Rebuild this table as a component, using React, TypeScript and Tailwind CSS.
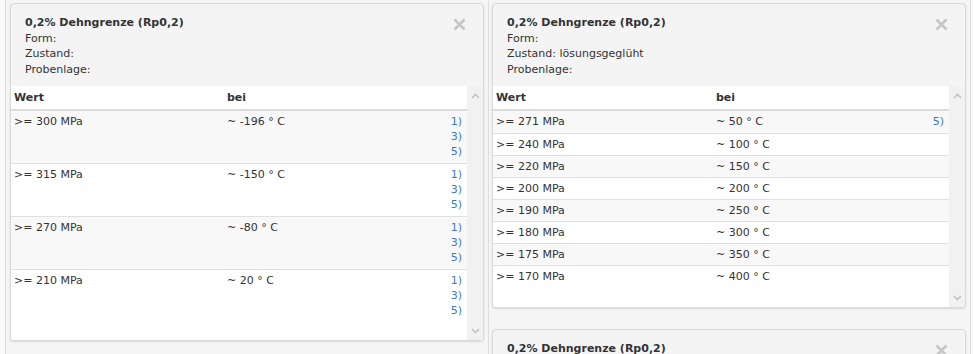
import * as React from 'react';

interface Row {
    wert: string;
    bei: string;
    refs: string[];
}

interface CardProps {
    zustand?: string;
    rows?: Row[];
    firstCol?: number;
    tableHeight?: number;
}

function CloseIcon() {
    return (
        <svg width="13" height="13" viewBox="0 0 13 13" className="shrink-0">
            <path d="M1.5 1.5 L11.5 11.5 M11.5 1.5 L1.5 11.5" stroke="#c6c6c6" strokeWidth="2.6" strokeLinecap="butt" />
        </svg>
    );
}

function Chevron({ up }: { up?: boolean }) {
    return (
        <svg width="9" height="6" viewBox="0 0 9 6">
            <path
                d={up ? 'M1 5 L4.5 1.5 L8 5' : 'M1 1 L4.5 4.5 L8 1'}
                fill="none"
                stroke="#c3c3c3"
                strokeWidth="1.6"
            />
        </svg>
    );
}

function Card({ zustand = '', rows, firstCol = 220, tableHeight = 220 }: CardProps) {
    return (
        <div className="rounded-[4px] border border-[#dadada] bg-[#f4f4f4] shadow-[0_1px_2px_rgba(0,0,0,0.12)] overflow-hidden">
            {/* Header */}
            <div className="flex justify-between pl-[14px] pr-[17px] pt-[11px] pb-[9px] leading-[15.5px]">
                <div>
                    <div className="font-bold text-[#333]">0,2% Dehngrenze (Rp0,2)</div>
                    {rows && (
                        <>
                            <div>Form:</div>
                            <div>Zustand:{zustand && ` ${zustand}`}</div>
                            <div>Probenlage:</div>
                        </>
                    )}
                </div>
                <div className="pt-[3px]">
                    <CloseIcon />
                </div>
            </div>

            {/* Table with scrollbar */}
            {rows && (
                <div className="flex bg-white" style={{ height: tableHeight }}>
                    <div className="flex-1">
                        <table className="w-full table-fixed border-collapse leading-[15px]">
                            <colgroup>
                                <col style={{ width: firstCol }} />
                                <col />
                                <col className="w-[40px]" />
                            </colgroup>
                            <thead>
                                <tr className="border-b-2 border-[#dcdcdc]">
                                    <th className="text-left font-bold px-[3px] pt-[4px] pb-[4px]">Wert</th>
                                    <th className="text-left font-bold px-[3px] pt-[4px] pb-[4px]">bei</th>
                                    <th />
                                </tr>
                            </thead>
                            <tbody>
                                {rows.map((row, i) => (
                                    <tr
                                        key={row.wert + row.bei}
                                        className={`border-b border-[#e0e0e0] last:border-b-0 ${i % 2 === 0 ? 'bg-[#f8f8f8]' : 'bg-white'}`}
                                    >
                                        <td className="align-top px-[3px] pt-[3px] pb-[3px]">{row.wert}</td>
                                        <td className="align-top px-[3px] pt-[3px] pb-[3px]">{row.bei}</td>
                                        <td className="align-top text-right pr-[5px] pt-[3px] pb-[4px] text-[#3a78c9]">
                                            {row.refs.map(r => (
                                                <div key={r}>{r}</div>
                                            ))}
                                        </td>
                                    </tr>
                                ))}
                            </tbody>
                        </table>
                    </div>
                    <div className="w-[16px] bg-[#f1f1f1] flex flex-col items-center justify-between pt-[7px] pb-[6px]">
                        <Chevron up />
                        <Chevron />
                    </div>
                </div>
            )}
        </div>
    );
}

const refs = ['1)', '3)', '5)'];

const leftRows: Row[] = [
    { wert: '>= 300 MPa', bei: '~ -196 ° C', refs },
    { wert: '>= 315 MPa', bei: '~ -150 ° C', refs },
    { wert: '>= 270 MPa', bei: '~ -80 ° C', refs },
    { wert: '>= 210 MPa', bei: '~ 20 ° C', refs },
];

const rightRows: Row[] = [
    { wert: '>= 271 MPa', bei: '~ 50 ° C', refs: ['5)'] },
    { wert: '>= 240 MPa', bei: '~ 100 ° C', refs: [] },
    { wert: '>= 220 MPa', bei: '~ 150 ° C', refs: [] },
    { wert: '>= 200 MPa', bei: '~ 200 ° C', refs: [] },
    { wert: '>= 190 MPa', bei: '~ 250 ° C', refs: [] },
    { wert: '>= 180 MPa', bei: '~ 300 ° C', refs: [] },
    { wert: '>= 175 MPa', bei: '~ 350 ° C', refs: [] },
    { wert: '>= 170 MPa', bei: '~ 400 ° C', refs: [] },
];

export default function App() {
    return (
        <div
            className="h-[354px] overflow-hidden bg-[#fafafa] px-[5px] text-[11px] text-[#333]"
            style={{ fontFamily: '"DejaVu Sans", Verdana, sans-serif' }}
        >
            <div className="flex h-full">
                <div className="w-[484px] shrink-0 border-x border-[#dedede] bg-[#f5f5f5] px-[4px] pt-[3px]">
                    <Card rows={leftRows} firstCol={213} tableHeight={254} />
                </div>
                <div className="w-[482px] shrink-0 border-r border-[#dedede] bg-[#f5f5f5] pl-[3px] pr-[4px] pt-[3px]">
                    <Card zustand="lösungsgeglüht" rows={rightRows} firstCol={220} tableHeight={221} />
                    <div className="mt-[21px]">
                        <Card />
                    </div>
                </div>
            </div>
        </div>
    );
}
